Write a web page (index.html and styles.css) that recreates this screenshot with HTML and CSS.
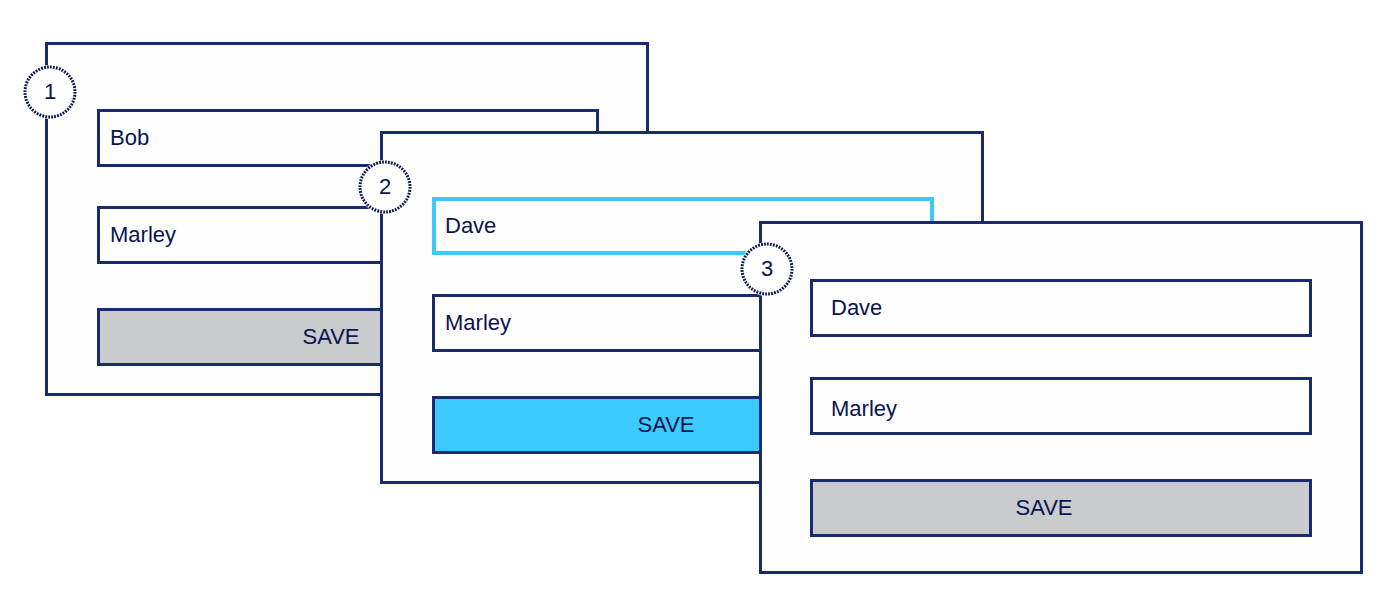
FILE: index.html
```html
<!DOCTYPE html>
<html lang="en">
<head>
<meta charset="utf-8">
<title>Save button states</title>
<link rel="stylesheet" href="styles.css">
</head>
<body>
<main class="steps">
  <form class="panel panel-first">
    <span class="badge"><svg class="ring" viewBox="0 0 54 54" aria-hidden="true"><circle cx="27" cy="27" r="25" pathLength="520"/></svg><span class="number">1</span></span>
    <input class="field" type="text" aria-label="First name" value="Bob">
    <input class="field" type="text" aria-label="Last name" value="Marley">
    <button class="save" type="button">SAVE</button>
  </form>
  <form class="panel panel-second">
    <span class="badge"><svg class="ring" viewBox="0 0 54 54" aria-hidden="true"><circle cx="27" cy="27" r="25" pathLength="520"/></svg><span class="number">2</span></span>
    <input class="field field-active" type="text" aria-label="First name" value="Dave">
    <input class="field" type="text" aria-label="Last name" value="Marley">
    <button class="save save-active" type="button">SAVE</button>
  </form>
  <form class="panel panel-third">
    <span class="badge"><svg class="ring" viewBox="0 0 54 54" aria-hidden="true"><circle cx="27" cy="27" r="25" pathLength="520"/></svg><span class="number">3</span></span>
    <input class="field" type="text" aria-label="First name" value="Dave">
    <input class="field field-low" type="text" aria-label="Last name" value="Marley">
    <button class="save" type="button">SAVE</button>
  </form>
</main>
</body>
</html>
```
FILE: styles.css
```css
* {
  box-sizing: border-box;
}

body {
  margin: 0;
  background: #fff;
  color: #08154f;
  font: 22px/26px "Liberation Sans", Arial, sans-serif;
}

.steps {
  display: grid;
  grid-template-columns: 45fr 335fr 269fr 110fr 225fr 379fr 37fr;
  align-items: start;
  padding-bottom: 30px;
}

.panel {
  position: relative;
  display: flex;
  flex-direction: column;
  grid-row: 1;
  min-width: 0;
  padding: 64px 47px 27px 49px;
  border: 3px solid #1a2a6e;
  background: #fefefe;
}

.panel-first {
  grid-column: 2 / 4;
  margin-top: 42px;
}

.panel-second {
  grid-column: 3 / 6;
  margin-top: 131px;
  padding-top: 63px;
}

.panel-third {
  grid-column: 5 / 7;
  margin-top: 221px;
  padding: 55px 48px 34px;
}

.field,
.save {
  width: 100%;
  min-width: 0;
  height: 58px;
  border: 3px solid #1a2a6e;
  border-radius: 0;
  color: inherit;
  font: inherit;
}

.field {
  margin: 0 0 39px;
  padding: 0 10px;
  background: #fefefe;
  outline: none;
}

.field-active {
  border-color: #3bcafa;
  border-width: 4px;
  padding-left: 9px;
}

.save {
  margin: 5px 0 0;
  padding: 0 34px 0 0;
  background: #cacbcf;
  text-align: center;
}

.save-active {
  background: #3bcafb;
}

.panel-third .field {
  margin-bottom: 40px;
  padding-left: 18px;
}

.panel-third .field-low {
  padding-top: 6px;
}

.panel-third .save {
  margin-top: 4px;
}

.badge {
  position: absolute;
  top: 20px;
  left: -25px;
  display: grid;
  place-items: center;
  width: 54px;
  height: 54px;
  border-radius: 50%;
  background: #fefefe;
}

.panel-second .badge {
  top: 26px;
}

.panel-third .badge {
  top: 18px;
  left: -22px;
}

.ring {
  grid-area: 1 / 1;
  width: 54px;
  height: 54px;
  fill: none;
  stroke: #08154f;
  stroke-width: 3;
  stroke-dasharray: 6 4;
}

.number {
  grid-area: 1 / 1;
}
```
